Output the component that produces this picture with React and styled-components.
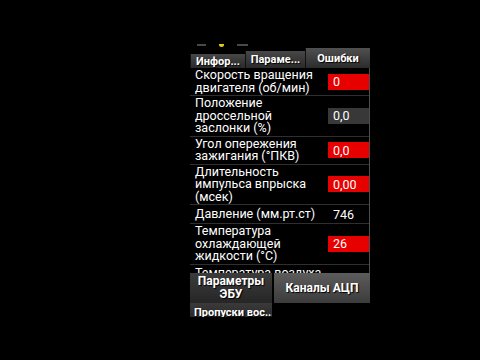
import styled, { createGlobalStyle } from 'styled-components';

const GlobalStyle = createGlobalStyle`
  html, body {
    margin: 0;
    padding: 0;
    background: #000;
  }
  body {
    font-family: Roboto, 'Liberation Sans', sans-serif;
  }
`;

const Screen = styled.div`
  width: 480px;
  height: 360px;
  overflow: hidden;
  background: #000;
  padding: 42px 0 0 190px;
  box-sizing: border-box;
`;

const Panel = styled.div`
  width: 180px;
  display: flex;
  flex-direction: column;
`;

const StatusRow = styled.div`
  display: flex;
  align-items: center;
  gap: 13px;
  height: 6px;
  padding-left: 7px;
`;

const StatusDash = styled.span`
  display: block;
  width: ${(p) => p.$w}px;
  height: 2px;
  background: #4a4a4a;
`;

const StatusDot = styled.span`
  display: block;
  width: 5px;
  height: 3px;
  border-radius: 0 0 3px 3px;
  background: #d8cc20;
`;

const Tabs = styled.div`
  display: flex;
  align-items: flex-start;
  height: 20px;
`;

const Tab = styled.div`
  width: ${(p) => p.$w}px;
  height: ${(p) => 20 - p.$offset}px;
  margin-top: ${(p) => p.$offset}px;
  display: flex;
  align-items: center;
  justify-content: center;
  box-sizing: border-box;
  background: ${(p) =>
    p.$active
      ? 'linear-gradient(#505050, #2c2c2c)'
      : 'linear-gradient(#474747, #2a2a2a)'};
  border-left: 1px solid #111;
  color: #fff;
  font-weight: 700;
  font-size: 11px;
  text-shadow: 1px 1px 1px #000;
  white-space: nowrap;
`;

const List = styled.div`
  height: 205px;
  overflow: hidden;
  border-right: 1px solid #4d4d4d;
  display: flex;
  flex-direction: column;
`;

const Row = styled.div`
  display: flex;
  align-items: center;
  justify-content: space-between;
  padding: 1px 0 1px 5px;
  border-bottom: 1px solid #2f2f2f;
  flex-shrink: 0;
`;

const Label = styled.div`
  width: 128px;
  color: #fff;
  font-size: 12.5px;
  line-height: 12.5px;
`;

const Value = styled.div`
  width: 41px;
  height: 16px;
  box-sizing: border-box;
  padding-left: 5px;
  display: flex;
  align-items: center;
  color: #fff;
  font-size: 12.5px;
  background: ${(p) =>
    p.$tone === 'red' ? '#e60000' : p.$tone === 'gray' ? '#383838' : 'transparent'};
`;

const Buttons = styled.div`
  display: grid;
  grid-template-columns: 82px 96px;
  gap: 2px;
  height: 30px;
  flex-shrink: 0;
`;

const Button = styled.div`
  display: flex;
  align-items: center;
  justify-content: center;
  text-align: center;
  color: #fff;
  font-weight: 700;
  font-size: 12px;
  line-height: 13px;
  text-shadow: 1px 1px 1px #000;
  background: ${(p) =>
    p.$light
      ? 'linear-gradient(#5c5c5c, #3c3c3c)'
      : 'linear-gradient(#3c3c3c, #262626)'};
`;

const SubRow = styled.div`
  width: 78px;
  height: 10px;
  overflow: hidden;
  padding: 4px 0 0 4px;
  background: linear-gradient(#3a3a3a, #2a2a2a);
  color: #fff;
  font-weight: 700;
  font-size: 11px;
  line-height: 12px;
  white-space: nowrap;
  text-shadow: 1px 1px 1px #000;
`;

const rows = [
  { label: 'Скорость вращения двигателя (об/мин)', value: '0', tone: 'red' },
  { label: 'Положение дроссельной заслонки (%)', value: '0,0', tone: 'gray' },
  { label: 'Угол опережения зажигания (°ПКВ)', value: '0,0', tone: 'red' },
  { label: 'Длительность импульса впрыска (мсек)', value: '0,00', tone: 'red' },
  { label: 'Давление (мм.рт.ст)', value: '746', tone: 'none' },
  { label: 'Температура охлаждающей жидкости (°C)', value: '26', tone: 'red' },
  { label: 'Температура воздуха', value: '', tone: 'none' },
];

export default function App() {
  return (
    <>
      <GlobalStyle />
      <Screen>
        <Panel>
          <StatusRow>
            <StatusDash $w={9} />
            <StatusDot />
            <StatusDash $w={11} />
          </StatusRow>
          <Tabs>
            <Tab $w={55} $offset={6}>Инфор...</Tab>
            <Tab $w={60} $offset={3}>Параме...</Tab>
            <Tab $w={65} $offset={0} $active>Ошибки</Tab>
          </Tabs>
          <List>
            {rows.map((r) => (
              <Row key={r.label}>
                <Label>{r.label}</Label>
                <Value $tone={r.tone}>{r.value}</Value>
              </Row>
            ))}
          </List>
          <Buttons>
            <Button>
              Параметры
              <br />
              ЭБУ
            </Button>
            <Button $light>Каналы АЦП</Button>
          </Buttons>
          <SubRow>Пропуски вос...</SubRow>
        </Panel>
      </Screen>
    </>
  );
}
